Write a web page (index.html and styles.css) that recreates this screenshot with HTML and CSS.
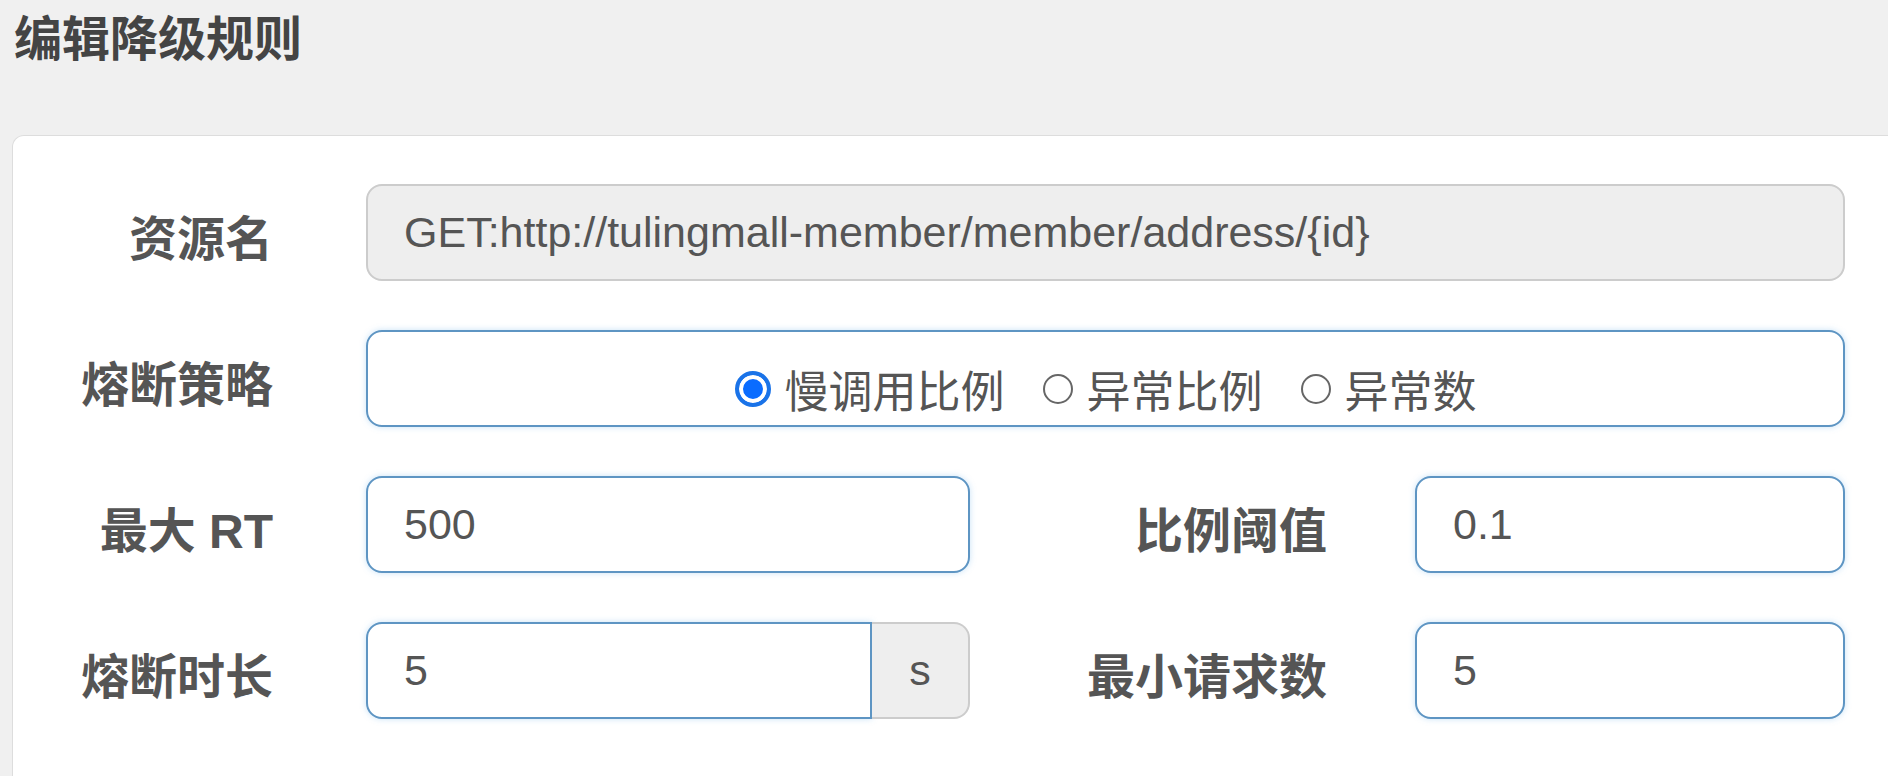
FILE: index.html
```html
<!DOCTYPE html>
<html>
<head>
  <meta charset="utf-8">
  <title>编辑降级规则</title>
  <link rel="stylesheet" href="styles.css">
</head>
<body>
  <h2 class="page-title">编辑降级规则</h2>
  <div class="panel">
    <form class="rule-form">
      <label class="form-label">资源名</label>
      <div class="field field-wide">
        <input type="text" class="form-input is-disabled" value="GET:http://tulingmall-member/member/address/{id}" disabled>
      </div>

      <label class="form-label">熔断策略</label>
      <div class="field field-wide radio-box">
        <label class="radio-item"><span class="radio checked"></span>慢调用比例</label>
        <label class="radio-item"><span class="radio"></span>异常比例</label>
        <label class="radio-item"><span class="radio"></span>异常数</label>
      </div>

      <label class="form-label">最大 RT</label>
      <div class="field">
        <input type="text" class="form-input" value="500">
      </div>
      <label class="form-label second">比例阈值</label>
      <div class="field">
        <input type="text" class="form-input" value="0.1">
      </div>

      <label class="form-label">熔断时长</label>
      <div class="field input-group">
        <input type="text" class="form-input" value="5">
        <span class="addon">s</span>
      </div>
      <label class="form-label second">最小请求数</label>
      <div class="field">
        <input type="text" class="form-input" value="5">
      </div>
    </form>
  </div>
</body>
</html>
```

FILE: styles.css
```css
body {
  margin: 0;
  background-color: #f0f0f0;
  font-family: "Liberation Sans", "Noto Sans CJK SC", sans-serif;
  color: #555;
  overflow: hidden;
}

.page-title {
  margin: 0;
  padding: 10px 14px 0;
  font-size: 48px;
  line-height: 60px;
  font-weight: bold;
  color: #444;
}

.panel {
  margin: 65px -20px 0 12px;
  height: 641px;
  padding-top: 48px;
  background-color: #fff;
  border: 1px solid #ddd;
  border-bottom: none;
  border-radius: 12px 12px 0 0;
  box-sizing: border-box;
}

.rule-form {
  display: grid;
  grid-template-columns: 353px 604px 445px 430px;
  grid-auto-rows: 97px;
  row-gap: 49px;
}

.form-label {
  display: flex;
  align-items: center;
  justify-content: flex-end;
  padding: 4px 93px 0 0;
  font-size: 48px;
  font-weight: bold;
  color: #555;
  white-space: nowrap;
}

.form-label.second {
  padding-right: 88px;
}

.field {
  display: flex;
}

.field-wide {
  grid-column: 2 / 5;
}

.form-input {
  flex: 1;
  min-width: 0;
  height: 97px;
  padding: 0 36px;
  font-family: "Liberation Sans", "Noto Sans CJK SC", sans-serif;
  font-size: 43px;
  color: #555;
  background-color: #fff;
  border: 2px solid #5e95c3;
  border-radius: 16px;
  box-shadow: 0 0 6px rgba(102, 175, 233, 0.35);
  box-sizing: border-box;
  outline: none;
}

.form-input.is-disabled {
  background-color: #eee;
  border-color: #ccc;
  box-shadow: none;
  color: #555;
}

.radio-box {
  align-items: center;
  justify-content: center;
  gap: 38px;
  padding-top: 20px;
  border: 2px solid #5e95c3;
  border-radius: 16px;
  box-shadow: 0 0 6px rgba(102, 175, 233, 0.35);
  box-sizing: border-box;
}

.radio-item {
  display: flex;
  align-items: center;
  gap: 14px;
  font-size: 44px;
  color: #555;
}

.radio {
  width: 30px;
  height: 30px;
  border: 2px solid #666;
  border-radius: 50%;
  box-sizing: border-box;
}

.radio.checked {
  width: 36px;
  height: 36px;
  border: 4px solid #1a73e8;
  background-color: #0a6cff;
  box-shadow: inset 0 0 0 4px #fff;
}

.input-group .form-input {
  border-radius: 16px 0 0 16px;
}

.addon {
  width: 98px;
  display: flex;
  align-items: center;
  justify-content: center;
  font-size: 43px;
  color: #555;
  background-color: #eee;
  border: 2px solid #ccc;
  border-left: none;
  border-radius: 0 16px 16px 0;
  box-sizing: border-box;
}
```
